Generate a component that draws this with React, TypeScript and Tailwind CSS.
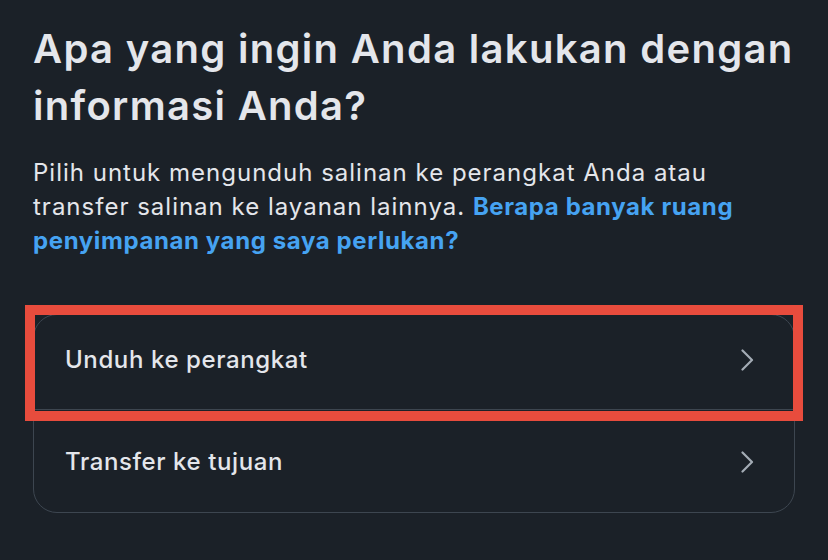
import React from "react";

function Chevron() {
  return (
    <svg width="16" height="22" viewBox="0 0 16 22" fill="none" className="shrink-0">
      <path d="M2.5 1.5 L12 11 L2.5 20.5" stroke="#a4acb5" strokeWidth="2.2" strokeLinecap="round" strokeLinejoin="round" />
    </svg>
  );
}

export default function App() {
  return (
    <div
      className="w-[828px] h-[560px] overflow-hidden bg-[#1b2128] px-[33px] pt-[20px] text-[#e4e6eb]"
      style={{ fontFamily: "Inter, 'Noto Sans', sans-serif" }}
    >
      <h1 className="text-[40px] leading-[57px] font-semibold tracking-[1.3px]">
        Apa yang ingin Anda lakukan dengan informasi Anda?
      </h1>
      <p className="mt-[22px] text-[24px] leading-[34px] tracking-[1px] pr-[60px]">
        Pilih untuk mengunduh salinan ke perangkat Anda atau transfer salinan ke layanan lainnya.{" "}
        <span className="font-bold text-[#46a3f2] tracking-[0.6px]">Berapa banyak ruang penyimpanan yang saya perlukan?</span>
      </p>
      <div className="relative mt-[56px] w-[762px]">
        <div className="rounded-[24px] border border-[#3d4650]">
          <div className="flex h-[95px] items-center justify-between border-b border-[#3d4650] pl-[31px] pr-[38px] pb-[4px]">
            <span className="text-[24px] font-medium tracking-[0.6px]">Unduh ke perangkat</span>
            <Chevron />
          </div>
          <div className="flex h-[102px] items-center justify-between pl-[31px] pr-[38px] pt-[2px]">
            <span className="text-[24px] font-medium tracking-[0.6px]">Transfer ke tujuan</span>
            <Chevron />
          </div>
        </div>
        <div className="pointer-events-none absolute left-[-8px] top-[-9px] h-[116px] w-[778px] border-[10px] border-[#e84c3d]" />
      </div>
    </div>
  );
}
